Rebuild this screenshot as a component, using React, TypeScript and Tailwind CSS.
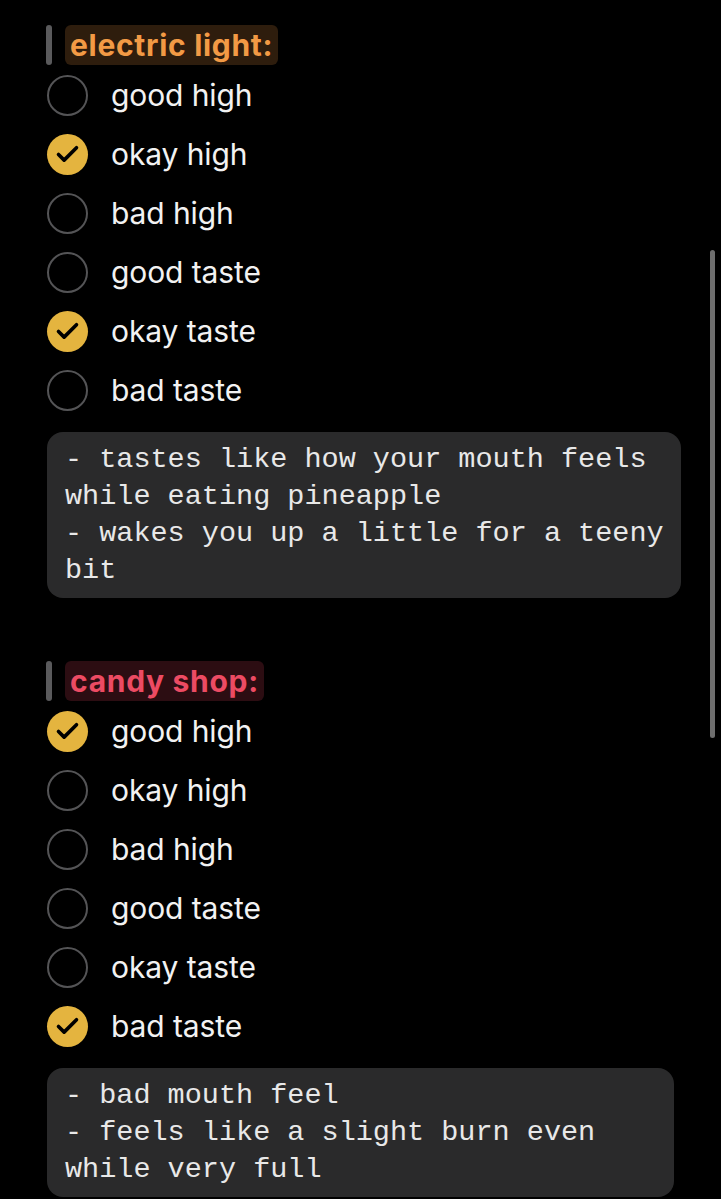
import { Check } from 'lucide-react';

type Item = { label: string; done: boolean };
type Strain = {
  name: string;
  tone: 'orange' | 'red';
  items: Item[];
  notes: string[];
  noteWidth: string;
};

const strains: Strain[] = [
  {
    name: 'electric light:',
    tone: 'orange',
    items: [
      { label: 'good high', done: false },
      { label: 'okay high', done: true },
      { label: 'bad high', done: false },
      { label: 'good taste', done: false },
      { label: 'okay taste', done: true },
      { label: 'bad taste', done: false },
    ],
    notes: ['- tastes like how your mouth feels', 'while eating pineapple', '- wakes you up a little for a teeny', 'bit'],
    noteWidth: 'w-[634px]',
  },
  {
    name: 'candy shop:',
    tone: 'red',
    items: [
      { label: 'good high', done: true },
      { label: 'okay high', done: false },
      { label: 'bad high', done: false },
      { label: 'good taste', done: false },
      { label: 'okay taste', done: false },
      { label: 'bad taste', done: true },
    ],
    notes: ['- bad mouth feel', '- feels like a slight burn even', 'while very full'],
    noteWidth: 'w-[627px]',
  },
];

const toneClasses = {
  orange: 'bg-[#2e1d0d] text-[#f29a45]',
  red: 'bg-[#2c0d12] text-[#ec4b63]',
};

function Heading({ name, tone }: { name: string; tone: Strain['tone'] }) {
  return (
    <div className="flex items-center gap-[13px] h-[40px]">
      <div className="w-[6px] h-[40px] rounded-full bg-[#5a5a5c]" />
      <span className={`h-[40px] flex items-center px-[5px] rounded-[6px] text-[30px] font-bold tracking-[0.7px] ${toneClasses[tone]}`}>
        {name}
      </span>
    </div>
  );
}

function Row({ item }: { item: Item }) {
  return (
    <div className="h-[59px] flex items-center gap-[23px] pl-[1px]">
      {item.done ? (
        <div className="w-[41px] h-[41px] rounded-full bg-[#e4b43f] flex items-center justify-center">
          <Check size={27} strokeWidth={3.2} className="text-black" />
        </div>
      ) : (
        <div className="w-[41px] h-[41px] rounded-full border-[2.5px] border-[#545456]" />
      )}
      <span className="text-[30px] text-[#f2f2f2] tracking-[-0.1px]">{item.label}</span>
    </div>
  );
}

export default function App() {
  return (
    <div className="relative min-h-screen bg-black pl-[46px] pt-[25px] font-['Inter','Liberation_Sans',sans-serif]">
      {strains.map((s, i) => (
        <section key={s.name} className={i > 0 ? 'mt-[63px]' : ''}>
          <Heading name={s.name} tone={s.tone} />
          <div className="mt-[1px]">
            {s.items.map(it => (
              <Row key={it.label} item={it} />
            ))}
          </div>
          <div className={`mt-[12px] ${s.noteWidth} ml-[1px] rounded-[16px] bg-[#2a2a2b] pl-[18px] py-[9px] font-['Liberation_Mono',monospace] text-[28.5px] leading-[37px] text-[#e8e8e8]`}>
            {s.notes.map(line => (
              <div key={line} className="whitespace-pre">{line}</div>
            ))}
          </div>
        </section>
      ))}

      {/* overlay scrollbar */}
      <div className="absolute left-[710px] top-[250px] w-[5px] h-[488px] rounded-full bg-[#6e6e6e]" />
    </div>
  );
}
